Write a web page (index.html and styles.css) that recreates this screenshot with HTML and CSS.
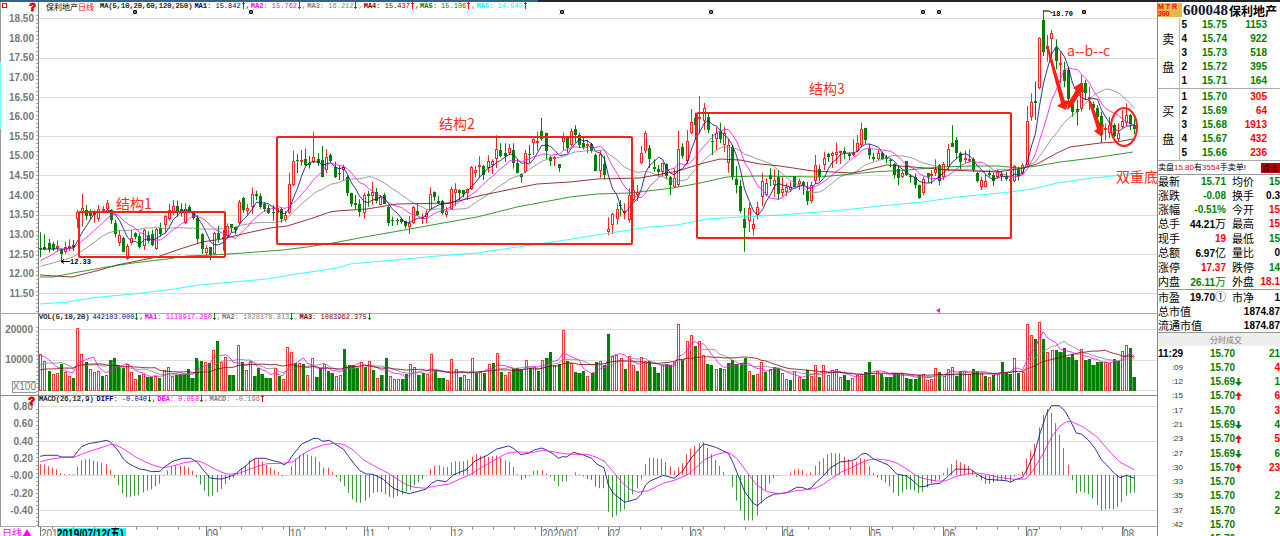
FILE: index.html
```html
<!DOCTYPE html>
<html lang="zh-CN">
<head>
<meta charset="utf-8">
<title>600048 保利地产</title>
<link rel="stylesheet" href="styles.css">
</head>
<body>
<div class="topline"></div>
<div class="terminal">
  <main class="charts">
    <section class="panel price">
      <div class="axis price-axis">
        <i class="marker"></i><b class="help">?</b>
        <span>18.50</span><span>18.00</span><span>17.50</span><span>17.00</span><span>16.50</span><span>16.00</span><span>15.50</span><span>15.00</span><span>14.50</span><span>14.00</span><span>13.50</span><span>13.00</span><span>12.50</span><span>12.00</span><span>11.50</span>
      </div>
      <div class="plot">
        <div class="legend legend-price">
          <span class="name">保利地产<em>日线</em></span>
          <span class="params">MA(5,10,20,60,120,250)</span>
          <span class="navy"><b>MA1</b>: 15.842<i class="up"></i>,</span>
          <span class="pink"><b>MA2</b>: 15.762<i class="down"></i>,</span>
          <span class="gray"><b>MA3</b>: 16.212<i class="down"></i>,</span>
          <span class="maroon"><b>MA4</b>: 15.437<i class="up"></i>,</span>
          <span class="green"><b>MA5</b>: 15.106<i class="up"></i>,</span>
          <span class="cyan"><b>MA6</b>: 14.540<i class="up"></i></span>
        </div>
        <svg id="price" viewBox="39 2 1118 311" preserveAspectRatio="none"></svg>
      </div>
    </section>
    <section class="panel volume">
      <div class="axis volume-axis"><span>20000</span><span>10000</span><span class="unit">X100</span></div>
      <div class="plot">
        <div class="legend">
          <span class="params">VOL(5,10,20)</span>
          <span class="navy">442103.000<i class="down"></i>,</span>
          <span class="pink"><b>MA1</b>: 1118917.250<i class="down"></i>,</span>
          <span class="gray"><b>MA2</b>: 1028178.813<i class="down"></i>,</span>
          <span class="maroon"><b>MA3</b>: 1083962.375<i class="down"></i></span>
        </div>
        <svg id="volume" viewBox="39 314 1118 81" preserveAspectRatio="none"></svg>
      </div>
    </section>
    <section class="panel macd">
      <div class="axis macd-axis">
        <b class="help">?</b>
        <span>0.80</span><span>0.60</span><span>0.40</span><span>0.20</span><span>-0.00</span><span>-0.20</span><span>-0.40</span>
      </div>
      <div class="plot">
        <div class="legend">
          <span class="params">MACD(26,12,9)</span>
          <span class="navy"><b>DIFF</b>: -0.040<i class="down"></i>,</span>
          <span class="pink"><b>DEA</b>: 0.058<i class="down"></i>,</span>
          <span class="gray"><b>MACD</b>: -0.196<i class="up"></i></span>
        </div>
        <svg id="macd" viewBox="39 396 1118 131" preserveAspectRatio="none"></svg>
      </div>
    </section>
    <section class="panel dates">
      <div class="axis period">日线▲</div>
      <div class="plot"><svg id="dates" viewBox="39 527 1118 9" preserveAspectRatio="none"></svg></div>
    </section>
  </main>
  <aside class="side">
    <header class="stock"><span class="badge">M T R<br>300</span><strong>600048</strong><b>保利地产</b></header>
    <table class="book">
      <tr><th rowspan="5"><span>卖</span><span>盘</span></th><td>5</td><td class="green">15.75</td><td class="green">1153</td></tr>
      <tr><td>4</td><td class="green">15.74</td><td class="green">922</td></tr>
      <tr><td>3</td><td class="green">15.73</td><td class="green">518</td></tr>
      <tr><td>2</td><td class="green">15.72</td><td class="green">395</td></tr>
      <tr><td>1</td><td class="green">15.71</td><td class="green">164</td></tr>
    </table>
    <table class="book">
      <tr><th rowspan="5"><span>买</span><span>盘</span></th><td>1</td><td class="green">15.70</td><td class="red">305</td></tr>
      <tr><td>2</td><td class="green">15.69</td><td class="red">64</td></tr>
      <tr><td>3</td><td class="green">15.68</td><td class="red">1913</td></tr>
      <tr><td>4</td><td class="green">15.67</td><td class="red">432</td></tr>
      <tr><td>5</td><td class="green">15.66</td><td class="red">236</td></tr>
    </table>
    <div class="notice"><span>卖盘<em>15.80</em>有<em>3554</em>手卖单!</span><button type="button">点击查</button></div>
    <table class="quote">
      <tr><th>最新</th><td class="green">15.71</td><th>均价</th><td class="green">15</td></tr>
      <tr><th>涨跌</th><td class="green">-0.08</td><th>换手</th><td>0.3</td></tr>
      <tr><th>涨幅</th><td class="green">-0.51%</td><th>今开</th><td class="red">15</td></tr>
      <tr><th>总手</th><td>44.21<small>万</small></td><th>最高</th><td class="red">15</td></tr>
      <tr><th>现手</th><td class="red">19</td><th>最低</th><td class="green">15</td></tr>
      <tr><th>总额</th><td>6.97<small>亿</small></td><th>量比</th><td>0</td></tr>
      <tr><th>涨停</th><td class="red">17.37</td><th>跌停</th><td class="green">14</td></tr>
      <tr><th>内盘</th><td class="green">26.11<small>万</small></td><th>外盘</th><td class="red">18.1</td></tr>
    </table>
    <table class="quote value">
      <tr><th>市盈</th><td>19.70<small>①</small></td><th>市净</th><td>1</td></tr>
      <tr><th colspan="2">总市值</th><td colspan="2">1874.87</td></tr>
      <tr><th colspan="2">流通市值</th><td colspan="2">1874.87</td></tr>
    </table>
    <h2>分时成交</h2>
    <table class="trades" id="trades"></table>
  </aside>
</div>
<script src="script.js"></script>
</body>
</html>
```
FILE: styles.css
```css
* { box-sizing: border-box; }
body { margin: 0; background: #fff; color: #000; font: 10px/14px "Liberation Sans", "Noto Sans CJK SC", sans-serif; overflow: hidden; }
em, i { font-style: normal; }
.topline { height: 2px; background: linear-gradient(90deg, #2c6496 42%, #25252c 42%); }
.terminal { display: grid; grid-template-columns: minmax(0, 1fr) 123px; }
.charts { display: flex; flex-direction: column; min-width: 0; }
.panel { display: grid; grid-template-columns: 39px minmax(0, 1fr); border-bottom: 1px solid #aaa; }
.price { height: 312px; }
.volume { height: 82px; border-bottom: 1px solid #888; }
.macd { height: 131px; }
.dates { height: 9px; overflow: hidden; border: 0; }
.plot { position: relative; min-width: 0; }
.plot svg { display: block; width: 100%; height: 100%; overflow: visible; }
.axis { position: relative; display: flex; flex-direction: column; justify-content: space-between; border-left: 1px solid #999; border-right: 1px solid #777; color: #777; font-weight: bold; text-align: right; padding-right: 5px; }
.axis span { line-height: 12px; }
.axis::after { content: ""; position: absolute; right: 0; top: 10px; bottom: 0; width: 2px; background: repeating-linear-gradient(#fff 0 3px, #aaa 3px 4px); }
.price-axis { padding-top: 11px; padding-bottom: 13px; border-left: 1px solid; border-image: linear-gradient(#999 61px, #7ff 61px 127px, #999 127px) 1; border-right: 0; }
.price-axis::before { content: ""; position: absolute; right: 0; top: 0; bottom: 0; width: 1px; background: #777; }
.price-axis::after { right: 1px; }
.volume-axis { padding-top: 10px; justify-content: flex-start; gap: 18px; }
.macd-axis { padding-top: 5px; padding-bottom: 10px; }
.axis .unit { border: 1px solid #999; font-weight: normal; align-self: flex-end; margin: -3px -4px 0 0; line-height: 10px; }
.marker { position: absolute; left: 1px; top: 1px; width: 5px; height: 5px; border: 1px solid #f00; }
.help { position: absolute; right: 3px; top: -2px; color: #e00; font-size: 11px; -webkit-text-stroke: 1px #e00; }
.period { border: 0; display: block; text-align: left; padding-left: 2px; color: #f0f; font: 10px/11px "Noto Sans CJK SC", sans-serif; white-space: nowrap; }
.period::after { display: none; }
.legend { position: absolute; z-index: 1; top: -1px; left: 0; display: flex; gap: 1px; font: 7px/9px "Liberation Mono", "Noto Sans CJK SC", monospace; white-space: nowrap; }
.legend .params { margin-right: 2px; -webkit-text-stroke: 0.2px; }
.legend-price { left: 7px; top: 0; }
.legend-price .params { margin: 0 1px 0 5px; }
.name { font: 8px/9px "Noto Sans CJK SC", sans-serif; }
.name em, .red, .notice em { color: #f00; }
.navy { color: #000080; } .pink { color: #f0f; } .gray { color: #808080; } .maroon { color: #800000; } .green { color: #008000; } .cyan { color: #0ff; }
.up, .down { display: inline-block; width: 3px; height: 7px; margin: 0 1px; vertical-align: -1px; background: linear-gradient(#f00, #f00) center / 1px 100% no-repeat, linear-gradient(#f00, #f00) 0 1px / 3px 1px no-repeat; }
.down { background: linear-gradient(#080, #080) center / 1px 100% no-repeat, linear-gradient(#080, #080) 0 5px / 3px 1px no-repeat; }
.side { border-left: 1px solid #888; overflow: hidden; height: calc(100vh - 2px); }
.stock { display: flex; align-items: center; height: 16px; white-space: nowrap; gap: 1px; }
.stock strong { font: bold 15px/15px "Liberation Serif", serif; color: #101030; }
.stock b { font: bold 12px/15px "Noto Sans CJK SC", sans-serif; }
.badge { width: 24px; height: 14px; background: #e9b64b; color: #f00; font: bold 7px/7px "Liberation Sans", sans-serif; }
table { width: 100%; border-collapse: collapse; table-layout: fixed; }
td, th { padding: 0; line-height: 13px; font-weight: bold; text-align: right; white-space: nowrap; }
.book { height: 71px; border-bottom: 1px solid #aaa; }
.book + .book { height: 72px; }
.book th { width: 21px; border-right: 1px solid #bbb; font: 12px/28px "Noto Sans CJK SC", sans-serif; text-align: center; }
.book th span { display: block; }
.book td:last-child { padding-right: 13px; }
.book td:nth-last-child(3) { width: 8px; text-align: right; }
.book td:nth-last-child(2) { width: 40px; }
.notice { display: flex; justify-content: space-between; height: 14px; border-bottom: 1px solid #999; font: 8px/13px "Liberation Sans", "Noto Sans CJK SC", sans-serif; white-space: nowrap; }
.notice button { width: 19px; height: 10px; margin: 2px 0; padding: 0 1px; border: 0; overflow: hidden; background: #b00; color: #000; font: 8px/10px "Noto Sans CJK SC", sans-serif; text-align: left; }
.quote { height: 114px; }
.quote th { width: 22px; font: 11px/13px "Noto Sans CJK SC", sans-serif; text-align: left; }
.quote th:nth-child(3) { width: 28px; padding-left: 6px; }
.quote td:nth-child(2) { width: 46px; }
.quote small { font: 11px/13px "Noto Sans CJK SC", sans-serif; }
.quote.value { height: 43px; border-top: 1px solid #999; }
.value td[colspan] { width: auto; }
h2 { margin: 0; height: 14px; padding-left: 52px; border-top: 1px solid #999; background: #eee; color: #777; font: 8px/13px "Noto Sans CJK SC", sans-serif; }
.trades { height: 200px; }
.trades td:first-child { width: 25px; font-size: 8px; font-weight: normal; color: #333; }
.trades tr:first-child td:first-child { font-size: 10px; font-weight: bold; color: #000; }
.trades td:nth-child(2) { width: 59px; text-align: left; padding-left: 27px; }
.trades svg { width: 7px; height: 8px; vertical-align: -1px; }
text { font-family: "Liberation Mono", monospace; font-size: 7px; font-weight: bold; }
.note { font: 14px "Noto Sans CJK SC", sans-serif; fill: #ff2a1a; }
.box { fill: none; stroke: #ff1e14; stroke-width: 2; }
.date { font: 10px "Liberation Sans", sans-serif; fill: #666; }
.current { font: bold 10px "Liberation Sans", "Noto Sans CJK SC", sans-serif; fill: #000; }
```
FILE: script.js
```js
// Series are digitised in sub-units (three per pixel), each segment with its own pixel origin.
const candleSegments = [
  [0, 150, `121g295 298 247 322,133g292 298 253 300,146g280 297 267 308,158g283 297 275 303,170r287 294 271 305,183g297 312 295 333,195r290 307 275 311,207r287 291 268 303,220g286 290 270 303,232r186 206 180 235,245r174 188 132 230,257g180 198 165 210,270g186 198 178 208,283r188 192 180 218,295r177 208 165 215,308r178 184 168 190,320r160 178 150 182,332g181 210 178 222,344g220 252 210 262,357r254 280 240 288,369g264 306 260 306,381r289 326 282 329,394r265 280 240 284,406g249 260 247 268,418g258 292 250 296,432r240 288 236 300,445g256 272 244 280,457g251 284 239 289,469r238 298 234 300,481g234 252 218 260,494r199 226 195 248,506r181 208 162 212,518r168 186 150 196,530g168 188 152 200,542g178 186 160 200,555r177 220 160 222,567g171 182 165 190,580g188 203 184 209,592g203 266 196 280,605g252 298 250 312,618r294 308 286 320,630g291 315 291 330,642r248 313 245 315,655g250 268 227 278,668r260 268 240 303,680r227 258 220 262,692g222 234 222 246,704g231 239 229 254,717r157 220 150 222,730g144 180 140 188,742r174 184 162 196,755r133 170 112 192,768g132 138 122 150,780g137 170 130 176,792g162 178 158 186,805g174 188 165 192`],
  [270, 90, `8g366 370 345 392,20r355 368 350 372,32g357 388 352 398,44r375 390 363 395,57r283 370 248 372,70r214 286 182 288,82g210 214 192 250,94r210 214 180 228,106g208 226 176 228,118g220 224 198 236,130r202 216 125 220,143g206 218 190 228,156g210 260 168 262,168r202 240 178 250,181g196 212 190 218,194g230 260 215 264,206g248 252 225 270,218r230 240 224 272,232g260 310 255 318,244g310 342 308 350,256g340 344 315 358,268g342 366 328 380,281r316 368 308 386,293g312 318 302 350,305r306 318 275 344,317g306 334 294 340,330r320 344 315 346,342g316 342 308 342,354g352 400 348 408,367g390 394 380 408,380g390 394 384 405,393g388 396 385 402,405g394 408 392 416,418r398 410 378 432,430r352 398 347 402,442g362 374 342 378,455r382 388 370 402,467r370 380 360 400,479r312 360 292 362,491g306 322 304 332,503g333 338 318 342,516g334 370 330 374,529r362 374 350 382,542r298 356 290 358,554r296 308 280 348,567g300 308 298 330,579g300 312 300 322,591r298 310 296 330,604r232 298 228 300,616r240 250 228 262,628r225 230 199 262,640g228 256 225 270,653r213 234 196 248,665r214 226 208 252,679r178 206 136 234,691g181 198 160 202,704g190 197 160 216,716r174 190 162 194,728g180 220 160 236,740g220 248 208 250,753g252 260 250 278,766r188 246 180 250,778g192 196 165 218,790r146 158 145 195,802r154 156 125 182,814g124 148 84 152,827g130 184 128 208,841g202 214 198 228,853r202 206 198 228,866g222 234 222 245,878r140 156 128 182,890g144 174 138 188,903r122 166 115 170,914g118 136 106 158,926g136 164 128 174,939g160 170 140 178,951r163 168 150 190,964g162 182 158 188,976g196 242 190 244,990r192 244 182 264,1003g222 256 198 268,1015r416 426 382 436,1027r372 404 368 432,1040r356 388 340 404,1051g344 348 330 380,1063r364 370 340 388,1076r316 390 295 398,1088r300 330 268 334,1100r306 316 285 332`],
  [640, 80, `3r220 250 198 254,15r158 212 152 220,28g204 238 195 264,41g260 266 238 275,54g268 276 255 290,66r250 276 248 290,79g252 288 250 298,91g290 316 288 345,103r294 320 265 322,115r208 314 152 320,127g202 228 190 236,140r184 242 150 252,152r127 160 87 162,164g114 136 98 178,176r112 118 48 160,191r84 124 69 150,203g112 150 98 160,215g183 187 162 226,228r160 176 142 210,240g152 178 128 190,253r158 194 140 216,265r196 250 178 278,277g200 290 195 300,289g296 314 258 340,301g318 392 300 400,313g417 443 384 515,326r384 422 370 456,340r432 446 415 467,352r382 406 365 418,365r304 352 278 378,377r310 344 295 348,389g285 297 265 318,401r300 314 268 350,414g290 342 270 360,427r328 338 290 350,439r320 336 310 348,451r320 330 305 336,463g289 320 288 322,476r302 312 296 330,489g305 318 303 345,502g332 362 306 375,514r316 362 305 370,526r256 302 225 312,538g266 290 254 304,551r234 254 215 270,563g222 232 218 246,575r220 228 215 264,588r215 226 188 252,600r214 220 212 252,612g212 218 202 238,626g222 228 218 240,639r218 226 178 228,651r190 212 165 218,664r148 196 128 200,676g145 180 143 192,688g206 224 193 238,700g232 238 218 243,713r220 236 210 240,725g220 236 215 240,737g232 238 225 250,749g240 244 236 262,761g252 284 250 296,773g268 294 258 316,787r278 290 272 294,799g244 284 243 288,811g288 292 283 308,825g292 314 280 326,838g316 354 314 356,850r296 338 290 346,863g279 290 279 308,874r282 288 270 312,886r268 278 238 288,898g256 304 252 316,910r252 290 246 300,923r206 262 192 272,935g190 200 136 200,949g180 220 172 236,961g220 246 215 268,974r234 240 212 250,986r236 240 208 248,998g236 270 232 276,1011g278 304 276 308,1023r300 322 290 330,1035r304 320 282 322,1048g280 286 270 290,1060g286 302 278 318,1072r272 292 268 296,1084g282 287 272 304,1099g290 298 276 302,1111r297 304 288 310`],
  [990, 0, `73r498 542 495 546,85g508 528 500 542,97r495 520 490 525,110r362 495 318 498,122r307 350 280 362,134g302 310 245 360,147r115 265 112 268,160g60 155 30 168,172r138 148 105 185,184r100 118 90 175,198g145 182 118 208,211r190 194 155 250,223g210 242 185 262,235g210 298 200 312,247g310 335 290 350,260g328 336 300 376,272r248 328 225 335,284g250 278 240 300,296r290 295 260 330,309g312 325 305 345,321g325 350 315 370,333g348 405 335 428,346r385 390 370 420,358r376 398 350 415,371g376 408 370 412,384r398 416 370 425,397r364 380 330 384,409r345 370 310 378,421g346 372 342 390,433g376 386 356 402`]
];
const candles = candleSegments.flatMap(([ox, oy, s]) => s.split(',').map(c => {
  const m = c.trim().match(/^(\d+)([rg])(.*)$/);
  const [top, bottom, high, low] = m[3].split(' ').map(v => oy + v / 3);
  return { x: Math.round(ox + m[1] / 3), up: m[2] === 'r', top, bottom, high, low };
}));

const volumes = `r147 r168 g198 r208 r205 g177 r202 r214 g218 r70 r147 g171 r192 r202 r199 g212 r211 g165 g160 g181 g190 r178 r202 r223 g210 r207 g216 g216 r212 g220 r196 r187 r214 g211 g208 g208 g193 g220 g160 g168 r172 g174 r134 g109 r172 r157 g211 g210 r121 g171 r196 r167 g212 g190 g208 g218 g218 r190 g212 r223 r127 r140 g174 r173 g178 r211 r159 g216 g190 r178 g199 g204 r214 r211 g132 g181 g180 g190 r170 g187 r168 g195 r218 g210 g160 r214 r223 r222
g222 g207 r178 r187 g210 g204 r208 r147 g199 g220 g220 r224 r162 r193 g216 r211 r223 r160 g205 r200 g205 r178 g174 r144 g202 r211 r200 g190 g190 g192 r166 g190 r186 g198 r166 g159 g140 r180 g176 r76 g168 r174 g202 g205 g199 r214 g205 g172 r169 g180 g88 r154 r150 r160 g193 r154 r180 g198 r155 r168 g167 g187 g205 r180 g178 g181 r170 r58 g165 r108 r91 g122 r108 r150 g178 g180 r193 g190 r193 g174 g165 g178 g175 g160 r199 g210 r208 r172 g202 r193 g187 g190
r205 r222 g226 r199 r216 g222 g196 r214 r181 g216 r180 r211 r196 r192 r216 g211 g226 r218 r210 r208 g202 g172 g210 r198 g208 g216 g216 g205 g208 r208 g218 g222 g222 g210 r208 r226 r222 r190 g202 r212 r193 r186 g212 g199 r199 r207 g193 g199 r204 g212 r216 g210 r207 g172 g204 g207 r160 g205 r202 r58 r90 g102 r51 g103 r142 r134 g134 g142 g130 g155 g147 g165 r133 g166 g162 g181 g171 g172 r172 r175 g162 g168 r139 r121 g128 g216`.split(/\s+/).map(v => ({ up: v[0] === 'r', y: 305 + v.slice(1) / 3 }));

const interpolate = (points, x) => {
  const found = points.findIndex(p => p[0] >= x);
  const k = found < 0 ? points.length - 1 : Math.max(1, found);
  const [a, b] = [points[k - 1], points[k]];
  return a[1] + (b[1] - a[1]) * (x - a[0]) / (b[0] - a[0]);
};
const anchors = [[0, 40.3], [88, 402], [127, 562.7], [155, 678.3], [185, 802.7], [217, 935.3], [239, 1026.7], [265, 1134.3]];
const barX = i => interpolate(anchors, i);

const average = (values, n, count) => values.map((_, i) =>
  values.slice(Math.max(0, i - n + 1), i + 1).reduce((a, b) => a + b) / Math.min(n, i + 1)).slice(-count);
const line = (points, color) => `<polyline points="${points.map(p => p.join()).join(' ')}" fill="none" stroke="${color}" stroke-width="0.8"/>`;
const parse = s => s.trim().split(/\s+/).map(p => p.split(',').map(Number));
const grid = ys => ys.map(y => `<path d="M39 ${y}H1157" stroke="#ddd"/>`).join('');
const hist = (a, b, c) => [...Array(10).fill(a), ...Array(5).fill(b), ...Array(4).fill(c)];

// Price panel
const closes = hist(271.7, 272.3, 249).concat(candles.map(c => c.up ? c.top : c.bottom));
const priceMa = (n, color) => line(average(closes, n, candles.length).map((y, i) => [candles[i].x + .5, y.toFixed(1)]), color);
const ma60 = parse('40,275 72,277 100,270 117,265 157,257 180,249 202,242 222,239 247,233 270,228 287,226 313,218 330,212 337,211 367,209 397,204 450,203 483,195 517,188 537,184 570,182 597,179 640,178 678,171 700,164 720,159 740,160 760,164 780,166 813,171 853,173 870,169 887,165 913,167 950,170 997,172 1017,169 1023,168 1037,164 1057,153 1070,147 1100,143 1117,142 1133,139');
const ma120 = parse('40,277 53,277 73,273 107,267 133,263 167,259 187,256 213,255 243,253 283,250 307,247 333,243 370,236 410,229 443,223 477,217 517,207 570,197 597,194 630,193 673,188 700,183 727,177 757,176 820,177 873,172 907,170 940,167 973,166 997,166 1020,168 1037,166 1060,162 1093,158 1133,152');
const ma250 = parse('40,304 67,302 100,297 133,294 167,290 200,285 233,282 267,279 297,274 337,268 350,264 383,261 437,256 477,253 517,247 553,242 603,234 649,227 677,225 707,219 740,217 780,215 820,212 853,209 880,206 923,202 957,197 990,194 1010,192 1033,189 1057,183 1093,178 1133,174');
const candle = c => {
  const color = c.up ? '#f22' : '#008000', x = c.x;
  const wick = `<path d="M${x + .5} ${c.high.toFixed(1)}V${c.low.toFixed(1)}" stroke="${color}"/>`;
  const top = Math.round(c.top), h = Math.max(1, Math.round(c.bottom) - top);
  return wick + (c.up
    ? `<rect x="${x - .5}" y="${top + .5}" width="2" height="${Math.max(1, h - 1)}" fill="#fff" stroke="${color}" stroke-width="1"/>`
    : `<rect x="${x - 1}" y="${top}" width="3" height="${h}" fill="${color}"/>`);
};
const star = x => `<path d="M${x - 1} 12h4" stroke="#000" stroke-width="4"/><path d="M${x - 1.5} 9.5l5 5m0-5l-5 5" stroke="#777" stroke-width="1"/>`;
document.getElementById('price').innerHTML =
  grid([18.5, 58.5, 97.5, 136.5, 175.5, 215.5, 254.5, 293.5]) +
  candles.map(candle).join('') + priceMa(5, '#000080') + priceMa(10, '#f0f') + priceMa(20, '#808080') +
  line(ma60, '#800000') + line(ma120, '#008000') + line(ma250, '#0ff') +
  [134, 250, 561, 710, 922, 938, 1083].map(star).join('') + `
  <rect class="box" x="79" y="212" width="146" height="45" rx="1"/>
  <rect class="box" x="277" y="137" width="355" height="107" rx="1"/>
  <rect class="box" x="697" y="113" width="314" height="125" rx="1"/>
  <ellipse class="box" cx="1124" cy="127" rx="13" ry="19"/>
  <g fill="#ff1e14"><path d="M1046 46L1048 45L1065 101L1069 100L1066 110L1057 106L1061 103Z"/>
  <path d="M1067 110L1068 103L1076 90L1073 88L1082 82L1084 92L1081 92L1073 105Z"/>
  <path d="M1088 100L1091 101L1101 126L1104 124L1102 137L1094 131L1097 129Z"/></g>
  <path d="M1044 11h5l3 2" stroke="#000" fill="none"/><text x="1052" y="16">18.70</text>
  <path d="M70 261.500H61m3-2l-3 2 3 2" stroke="#000" fill="none"/><text x="70" y="264">12.33</text>
  <text class="note" x="116" y="209">结构1</text><text class="note" x="439" y="129">结构2</text>
  <text class="note" x="809" y="94">结构3</text><text class="note" x="1067" y="56">a--b--c</text><text class="note" x="1116" y="182">双重底</text>
  <path d="M940 308v5l-4-2.500z" fill="#f0f"/>`;

// Volume panel
const volumeHistory = hist(375.3, 373.3, 356).concat(volumes.map(v => v.y));
const volumeMa = (n, color) => line(average(volumeHistory, n, volumes.length).map((y, i) => [barX(i).toFixed(1), y.toFixed(1)]), color);
document.getElementById('volume').innerHTML = grid([329.5, 360.5, 390.5]) +
  volumes.map((v, i) => {
    const x = Math.round(barX(i)), y = Math.round(v.y), next = volumes[i + 1];
    if (v.up) return `<rect x="${x - .5}" y="${y + .5}" width="2" height="${390 - y}" fill="#fff" stroke="#f33"/>`;
    const solid = `<rect x="${x - 1}" y="${y}" width="3" height="${391 - y}" fill="#008000"/>`;
    if (!next || next.up) return solid;
    const joinTop = Math.max(y, Math.round(next.y));
    return solid + `<rect x="${x + 2}" y="${joinTop}" width="1" height="${391 - joinTop}" fill="#4caf4c"/>`;
  }).join('') + volumeMa(5, '#f0f') + volumeMa(10, '#808080') + volumeMa(20, '#800000');

// MACD panel
const join = parts => parts.flatMap(([ox, s]) => parse(s).map(([x, y]) => [ox + x / 3, 305 + y / 3]));
const diff = join([
  [0, '121,454 135,451 170,451 185,456 220,456 232,440 245,425 265,416 300,410 320,406 332,412 345,426 358,442 370,462 385,475 400,483 418,492 435,494 455,500 480,499 494,485 520,468 550,460 572,460 592,472 610,495 630,519 645,521 665,522 685,516 706,508 720,495 735,485 750,470 768,460 795,460 820,467 840,472 853,480 865,470 880,448 905,417 925,408 942,400 955,401 968,409 988,406 1010,420 1030,432 1048,457 1065,480 1080,497 1098,507 1120,508 1150,523 1165,537 1180,549 1198,557'],
  [400, '5,560 28,566 50,560 77,553 95,535 112,526 138,530 160,510 202,492 225,468 263,450 290,432 326,423 340,430 363,449 388,444 400,436 425,429 437,434 460,447 475,460 487,455 500,456 520,442 550,450 575,460 590,477 612,488 625,540 640,565 660,581 675,592 710,582 723,568 737,540 750,528 790,511 823,520 848,498 873,460 890,440 911,417 925,420 950,428 985,445 1000,475 1020,525 1034,560 1060,595 1072,602 1097,580 1121,568 1147,565'],
  [780, '20,563 50,547 65,547 82,553 94,548 110,530 130,513 150,490 180,471 215,467 232,460 243,448 258,445 280,461 325,480 350,507 380,513 400,528 418,545 432,545 452,538 480,535 500,517 528,492 572,493 590,507 620,523 680,527 690,532 705,524 727,518 740,495 765,440 780,385 800,325 815,302 838,302 855,318 870,345 889,384 905,388 925,405 945,430 965,466 980,480 1000,502 1020,518 1040,511 1063,520']]);
const dea = join([
  [0, '121,470 150,463 180,458 222,457 260,442 300,429 332,418 350,421 375,434 405,455 435,470 460,481 485,488 510,485 550,474 590,467 605,471 640,490 665,502 685,508 720,504 745,494 770,485 800,476 850,475 880,470 905,450 935,432 970,420 1000,415 1030,418 1060,435 1090,464 1130,487 1165,505 1198,526'],
  [400, '20,540 45,547 77,550 100,544 145,538 175,524 205,512 240,490 280,467 320,445 345,441 400,442 430,436 470,442 500,447 560,448 585,455 612,468 640,500 665,532 690,553 715,562 745,557 790,535 823,526 860,511 890,486 915,463 945,450 975,442 990,445 1010,460 1040,500 1070,540 1100,560 1140,566'],
  [780, '20,563 50,557 90,553 110,548 130,538 155,520 185,500 215,488 240,475 265,465 290,462 325,466 350,474 380,492 415,516 440,523 470,528 495,528 530,514 560,507 590,504 620,508 650,516 700,523 738,522 760,495 790,445 815,395 840,363 860,350 875,350 910,366 950,395 985,435 1020,472 1063,494']]);
const fix = points => points.map(p => p.map(v => v.toFixed(1)));
document.getElementById('macd').innerHTML = grid([406.5, 441.5, 475.5, 510.5]) +
  volumes.map((_, i) => {
    const x = barX(i), h = 2 * (interpolate(dea, x) - interpolate(diff, x));
    return `<path d="M${Math.floor(x) + .5} 475v${(-h).toFixed(1)}" stroke="${h > 0 ? '#f44' : '#3a9a3a'}"/>`;
  }).join('') + line(fix(diff), '#000080') + line(fix(dea), '#f0f');

// Date axis
const months = [[40, '201'], [206, '09'], [289, '10'], [364, '11'], [451, '12'], [541, '2020/01'], [608, '02'], [690, '03'], [782, '04'], [869, '05'], [943, '06'], [1026, '07'], [1122, '08']];
document.getElementById('dates').innerHTML =
  Array.from({ length: 52 }, (_, i) => `<path d="M${52.5 + i * 21} 527v2" stroke="#888"/>`).join('') +
  months.map(([x, t]) => `<path d="M${x + .5} 527v9" stroke="#777"/><text class="date" x="${x + 1}" y="536">${t}</text>`).join('') +
  '<rect x="57" y="528" width="69" height="8" fill="#0ff"/><text class="current" x="57" y="536">2019/07/12(五)</text>';

// Time and sales
const trades = [['11:29', '15.70', '', '21', 'green'], [':09', '15.70', '', '4', 'red'], [':12', '15.69', 'd', '1', 'green'], [':15', '15.70', 'u', '6', 'red'], [':17', '15.70', '', '3', 'red'], [':21', '15.69', 'd', '4', 'green'], [':23', '15.70', 'u', '5', 'red'], [':27', '15.69', 'd', '6', 'green'], [':30', '15.70', 'u', '23', 'red'], [':33', '15.70', '', '', 'green'], [':35', '15.70', '', '2', 'green'], [':37', '15.70', '', '2', 'green'], [':42', '15.70', '', '', 'green'], ['', '15.70', '', '', 'green']];
const arrows = {
  '': '', u: '<svg viewBox="0 0 7 8"><path d="M3.500 0L7 4H4.500V8H2.500V4H0z" fill="red"/></svg>',
  d: '<svg viewBox="0 0 7 8"><path d="M3.500 8L7 4H4.500V0H2.500V4H0z" fill="green"/></svg>'
};
document.getElementById('trades').innerHTML = trades.map(([t, p, a, n, c]) =>
  `<tr><td>${t}</td><td class="green">${p}${arrows[a]}</td><td class="${c}">${n}</td></tr>`).join('');
```
